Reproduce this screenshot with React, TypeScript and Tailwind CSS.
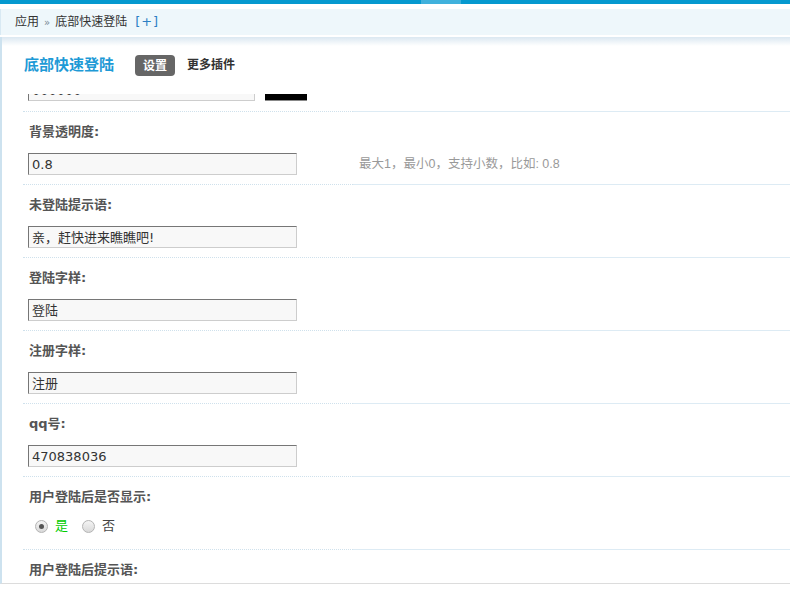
import React from "react";

const FONT = { fontFamily: '"DejaVu Sans", "Noto Sans CJK SC", sans-serif' };

type Field = {
  label: string;
  value?: string;
  hint?: string;
  radio?: boolean;
};

const fields: Field[] = [
  { label: "背景透明度:", value: "0.8", hint: "最大1，最小0，支持小数，比如: 0.8" },
  { label: "未登陆提示语:", value: "亲，赶快进来瞧瞧吧!" },
  { label: "登陆字样:", value: "登陆" },
  { label: "注册字样:", value: "注册" },
  { label: "qq号:", value: "470838036" },
  { label: "用户登陆后是否显示:", radio: true },
  { label: "用户登陆后提示语:" },
];

const Separator = () => (
  <div className="flex ml-[21px]">
    <div className="w-[330px] border-t border-dotted border-[#cfe1ec]" />
    <div className="flex-1 border-t border-[#ddebf4]" />
  </div>
);

const TextBox = ({ value, width = "w-[269px]" }: { value: string; width?: string }) => (
  <div
    className={`${width} h-[22px] flex items-center pl-[3px] bg-[#f8f8f8] border border-t-[#767676] border-l-[#767676] border-r-[#cdcdcd] border-b-[#cdcdcd] text-[13px] text-[#333] leading-none`}
  >
    {value}
  </div>
);

const Radio = ({ checked }: { checked?: boolean }) => (
  <div className="w-[13px] h-[13px] rounded-full border border-[#b4b4b4] bg-gradient-to-b from-[#f4f4f4] to-[#d9d9d9] flex items-center justify-center">
    {checked && <div className="w-[5px] h-[5px] rounded-full bg-[#555]" />}
  </div>
);

const Row = ({ field }: { field: Field }) => (
  <div>
    <Separator />
    <div className={`pl-[27px] pt-[11px] ${field.radio ? "pb-[12px]" : "pb-[9px]"}`}>
      <div className="h-[18px] leading-[18px] text-[13px] font-bold text-[#555]">{field.label}</div>
      {field.value !== undefined && (
        <div className="flex items-center mt-[12px]">
          <div className="-ml-[1px]">
            <TextBox value={field.value} />
          </div>
          {field.hint && (
            <span
              className="ml-[62px] text-[12.5px] text-[#999]"
              style={{ fontFamily: '"Liberation Sans", "Noto Sans CJK SC", sans-serif' }}
            >
              {field.hint}
            </span>
          )}
        </div>
      )}
      {field.radio && (
        <div className="flex items-center h-[22px] mt-[9px] text-[13px]">
          <div className="ml-[6px]">
            <Radio checked />
          </div>
          <span className="ml-[7px] text-[#00cc00]">是</span>
          <div className="ml-[14px]">
            <Radio />
          </div>
          <span className="ml-[7px] text-[#444]">否</span>
        </div>
      )}
    </div>
  </div>
);

export default function App() {
  return (
    <div className="w-[790px] h-[595px] bg-white overflow-hidden flex flex-col" style={FONT}>
      <div className="h-[4px] bg-[#0599cf] flex">
        <div className="w-[421px]" />
        <div className="w-[40px] bg-[#40b1dc]" />
      </div>
      <div className="h-[5px]" />
      <div className="h-[26px] bg-[#eef7fb] border-l border-[#d8e9f3] flex items-center pl-[14px] text-[12px] text-[#333]">
        <span>应用</span>
        <span className="mx-[5px] text-[10px] text-[#7a8a96]">»</span>
        <span>底部快速登陆</span>
        <span className="ml-[8px] text-[13px] text-[#2c7fc4] tracking-[1px]">[+]</span>
      </div>
      <div className="h-[2px]" />
      <div className="h-[547px] border-l-2 border-l-[#cde2ef] border-b border-b-[#dcdcdc] flex flex-col">
        <div className="h-[9px] bg-gradient-to-b from-[#dbe8f1] to-white" />
        <div className="h-[48px] flex items-start pt-[9px] pl-[22px]">
          <span className="text-[15px] font-bold text-[#1e9ad6] leading-[21px]">底部快速登陆</span>
          <span className="ml-[21px] w-[40px] h-[21px] rounded-[4px] bg-[#666] text-white text-[12px] font-bold flex items-center justify-center">
            设置
          </span>
          <span className="ml-[12px] text-[12px] font-bold text-[#333] leading-[21px]">更多插件</span>
        </div>
        <div className="flex-1 overflow-hidden">
          <div className="h-[7px] overflow-hidden flex items-end pl-[26px]">
            <div className="flex items-end shrink-0">
              <TextBox value="000000" width="w-[227px]" />
              <div className="ml-[10px] w-[42px] h-[16px] bg-black border-b border-[#888]" />
            </div>
          </div>
          <div className="h-[10px]" />
          {fields.map((f) => (
            <Row key={f.label} field={f} />
          ))}
        </div>
      </div>
    </div>
  );
}
